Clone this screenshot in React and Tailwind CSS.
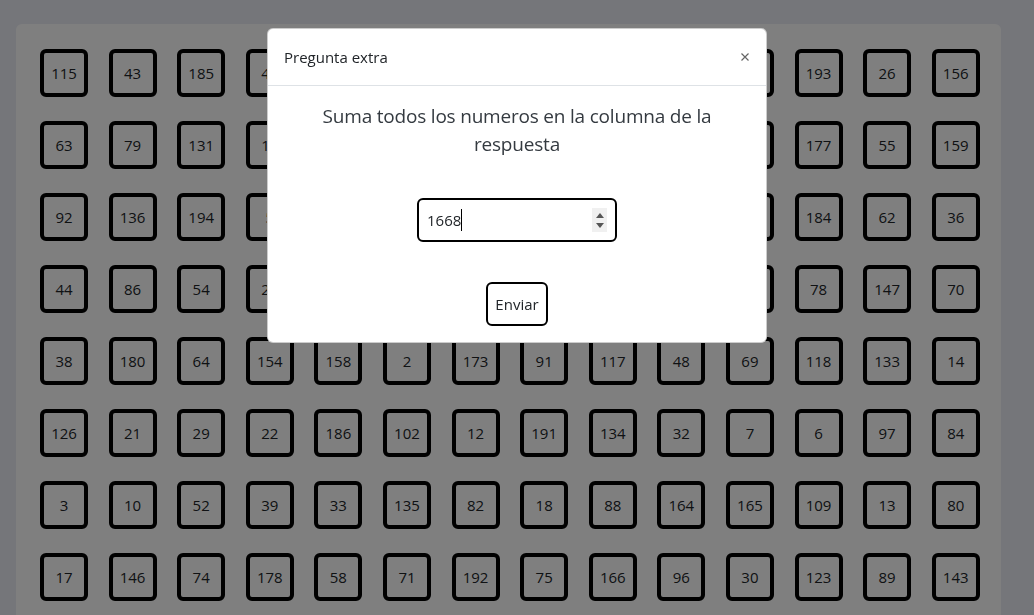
import React from 'react';

const rows = [
  [115, 43, 185, 47, 101, 8, 160, 27, 140, 112, 99, 193, 26, 156],
  [63, 79, 131, 16, 57, 120, 41, 183, 65, 175, 11, 177, 55, 159],
  [92, 136, 194, 5, 137, 24, 108, 152, 34, 170, 60, 184, 62, 36],
  [44, 86, 54, 25, 189, 94, 15, 129, 76, 141, 119, 78, 147, 70],
  [38, 180, 64, 154, 158, 2, 173, 91, 117, 48, 69, 118, 133, 14],
  [126, 21, 29, 22, 186, 102, 12, 191, 134, 32, 7, 6, 97, 84],
  [3, 10, 52, 39, 33, 135, 82, 18, 88, 164, 165, 109, 13, 80],
  [17, 146, 74, 178, 58, 71, 192, 75, 166, 96, 30, 123, 89, 143],
];

function NumberBox({ value }) {
  return (
    <div className="w-12 h-12 border-4 border-black rounded-md flex items-center justify-center text-[15px] text-[#212529]">
      {value}
    </div>
  );
}

export default function App() {
  return (
    <div
      className="relative h-screen overflow-hidden bg-[#ebedf4] pr-[17px] pt-6"
      style={{ fontFamily: '"Open Sans", "Noto Sans", sans-serif' }}
    >
      {/* Tablero */}
      <div className="mx-4 bg-white rounded-md pl-6 pt-[25px] pb-6">
        <div className="grid grid-cols-[repeat(14,48px)] gap-x-[20.6px] gap-y-6">
          {rows.flat().map((n, i) => (
            <NumberBox key={i} value={n} />
          ))}
        </div>
      </div>

      {/* Fondo del modal */}
      <div className="fixed inset-0 bg-black/50" />

      {/* Modal */}
      <div className="fixed inset-0 flex justify-center pt-7">
        <div className="w-[500px] h-fit bg-white border border-black/20 rounded-md">
          <div className="flex items-center justify-between px-4 py-4 border-b border-[#dee2e6]">
            <h5 className="text-[15px] leading-6 text-[#212529]">Pregunta extra</h5>
            <button className="flex items-center justify-center opacity-60 mr-px">
              <svg width="8" height="8" viewBox="0 0 8 8">
                <path d="M0.5 0.5 L7.5 7.5 M7.5 0.5 L0.5 7.5" stroke="#000" strokeWidth="1.2" />
              </svg>
            </button>
          </div>
          <div className="p-4 flex flex-col items-center">
            <p className="text-[19px] tracking-[-0.2px] leading-7 text-center text-[#343a40]">
              Suma todos los numeros en la columna de la respuesta
            </p>
            <div className="mt-10 w-[200px] h-11 border-2 border-black rounded-md flex items-center pl-2 pr-2">
              <span className="text-[15px] text-[#212529]">1668</span>
              <span className="w-px h-[22px] bg-black" />
              <div className="ml-auto w-[15px] h-6 bg-[#f0f0f0] flex flex-col items-center justify-center gap-[5px]">
                <svg width="8" height="5" viewBox="0 0 8 5"><path d="M4 0 L8 5 L0 5 Z" fill="#555" /></svg>
                <svg width="8" height="5" viewBox="0 0 8 5"><path d="M0 0 L8 0 L4 5 Z" fill="#555" /></svg>
              </div>
            </div>
            <button className="mt-10 h-11 px-[7px] border-2 border-black rounded-md text-[15px] text-[#212529]">
              Enviar
            </button>
          </div>
        </div>
      </div>
    </div>
  );
}
